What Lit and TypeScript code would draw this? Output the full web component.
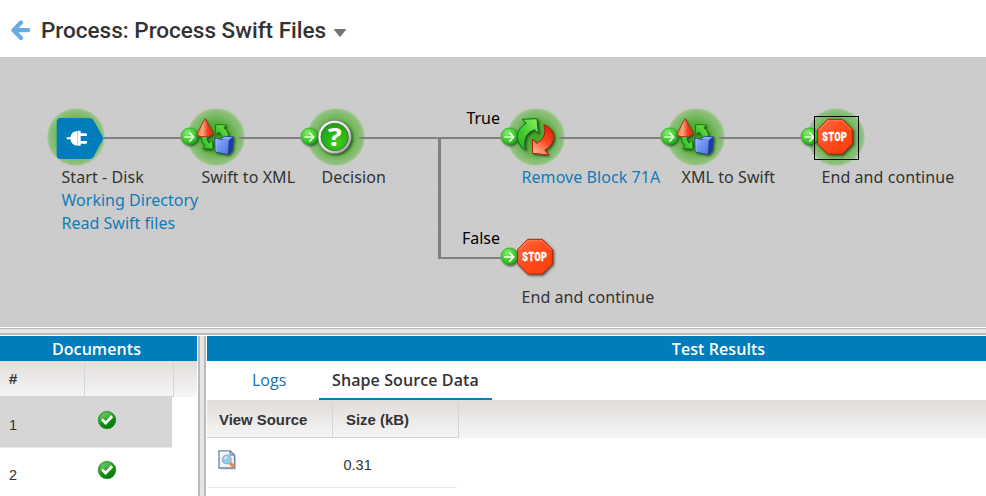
import { LitElement, html, css, svg, nothing } from "lit";
import { customElement, property } from "lit/decorators.js";

type Kind = "start" | "map" | "decision" | "process" | "stop";

interface FlowNode {
  kind: Kind;
  x: number;
  y: number;
  label: string;
  linked?: boolean;
  links?: string[];
  halo?: boolean;
  selected?: boolean;
}

const NODES: FlowNode[] = [
  { kind: "start", x: 40, y: 50, label: "Start - Disk", links: ["Working Directory", "Read Swift files"], halo: true },
  { kind: "map", x: 180, y: 50, label: "Swift to XML", halo: true },
  { kind: "decision", x: 300, y: 50, label: "Decision", halo: true },
  { kind: "process", x: 500, y: 50, label: "Remove Block 71A", linked: true, halo: true },
  { kind: "map", x: 660, y: 50, label: "XML to Swift", halo: true },
  { kind: "stop", x: 800, y: 50, label: "End and continue", halo: true, selected: true },
  { kind: "stop", x: 500, y: 170, label: "End and continue" },
];

const glyphs = {
  start: svg`<g transform="scale(.33333) translate(0 -21)">
    <path d="M62 54H148Q155 54 160 60L191 115L160 171Q155 177 148 177H62Q50 177 50 165V66Q50 54 62 54Z" fill="#007dba"/>
    <path d="M80 112H91Q95 93 113 93V137Q95 137 91 118H80ZM114 92H122V137H114ZM122 100H138Q141 100 141 103V108H122ZM122 123H141V128Q141 131 138 131H122Z" fill="#fff"/>
  </g>`,
  map: svg`<g transform="scale(.33333) translate(-30 -21)" stroke-linejoin="round">
    <g filter="url(#drop)">
      <path d="M95 100L112 106Q108 120 117 130L127 121L129 147L97 146L105 138Q90 122 95 100Z" fill="url(#leaf)" stroke="#138213" stroke-width="3"/>
      <path d="M136 74L169 75L161 84Q177 93 175 114L154 114Q156 103 147 96L137 104Z" fill="url(#leaf)" stroke="#138213" stroke-width="3"/>
      <path d="M105 56L130 102Q118 112 105 110Q91 112 80 105Z" fill="url(#cone)" stroke="#b53317" stroke-width="3"/>
      <path d="M134 113L151 118L162 109L190 110L187 152L175 164L137 156Z" fill="#24439f" stroke="#24439f" stroke-width="2"/>
      <path d="M136 115L152 119L176 120L174 162L138 155Z" fill="url(#cube)"/>
      <path d="M152 118L163 110L188 112L176 120Z" fill="#8eacf2"/>
      <path d="M138 117L138 154" stroke="#b5ccff" stroke-width="2"/>
      <path d="M177 121L189 113L186 151L176 162Z" fill="#1c3b9f"/>
    </g>
  </g>`,
  decision: svg`<g transform="scale(.33333) translate(-30 -21)">
    <g filter="url(#drop)"><circle cx="134" cy="111" r="50" fill="url(#rim)" stroke="#777" stroke-width="2"/></g>
    <circle cx="134" cy="111" r="41" fill="url(#disc)" stroke="#38813a" stroke-width="3"/>
    <text x="134" y="137" text-anchor="middle" textLength="42" lengthAdjust="spacingAndGlyphs" class="q">?</text>
  </g>`,
  process: svg`<g transform="scale(.33333) translate(-210 -36)" stroke-linejoin="round">
    <g filter="url(#drop)">
      <path d="M277 73L321 71L325 115L313 104Q276 117 286 164Q263 151 261 124Q264 99 289 85Z" fill="url(#leaf)" stroke="#087326" stroke-width="3"/>
      <path d="M342 89Q371 101 372 127Q370 149 345 166L356 180L308 175L307 132L320 145Q353 128 342 89Z" fill="url(#flame)" stroke="#b51b0a" stroke-width="3"/>
    </g>
  </g>`,
  stop: svg`<g transform="scale(.33333) translate(-30 -21)">
    <g filter="url(#drop)"><path d="M113 58H157L187 88V132L157 162H113L83 132V88Z" fill="url(#sign)" stroke="#bc2509" stroke-width="3"/></g>
    <path d="M113 60H156L185 89L182 91L155 64H115L87 92L85 89Z" fill="#ff8a66" opacity=".55"/>
    <text x="97" y="124" textLength="75" lengthAdjust="spacingAndGlyphs" class="stop">STOP</text>
  </g>`,
};

@customElement("flow-icon")
export class FlowIcon extends LitElement {
  @property() kind: Kind = "map";
  @property({ type: Boolean }) halo = false;
  @property({ type: Boolean }) selected = false;

  static styles = css`
    :host { display: block; width: 66px; height: 60px; }
    svg { display: block; overflow: visible; }
    .q { font: bold 76px "Noto Sans", sans-serif; fill: #fff; }
    .stop { font: 900 38px Roboto, sans-serif; letter-spacing: 2px; fill: #fff; stroke: #fff; stroke-width: 1px; }
  `;

  render() {
    return html`<svg width="66" height="60" viewBox="0 0 66 60">
      <defs>
        <radialGradient id="halo">
          <stop offset="0" stop-color="#3fa51c" stop-opacity=".95"/>
          <stop offset=".55" stop-color="#4cac2c" stop-opacity=".85"/>
          <stop offset=".93" stop-color="#6cba52" stop-opacity=".62"/>
          <stop offset="1" stop-color="#8bc878" stop-opacity=".35"/>
        </radialGradient>
        <radialGradient id="ball" cx=".4" cy=".3" r=".75">
          <stop offset="0" stop-color="#86ec6c"/><stop offset=".6" stop-color="#3fcd2a"/><stop offset="1" stop-color="#1ba417"/>
        </radialGradient>
        <linearGradient id="leaf" x1="0" y1="1" x2="1" y2="0">
          <stop offset="0" stop-color="#25a81c"/><stop offset=".5" stop-color="#4dd032"/><stop offset="1" stop-color="#8aee68"/>
        </linearGradient>
        <linearGradient id="cone">
          <stop offset="0" stop-color="#ff6a42"/><stop offset=".35" stop-color="#ffa68a"/><stop offset=".65" stop-color="#f4431c"/><stop offset="1" stop-color="#d92d0b"/>
        </linearGradient>
        <linearGradient id="cube" x2="1" y2="1"><stop offset="0" stop-color="#8fb2fa"/><stop offset="1" stop-color="#4a74dc"/></linearGradient>
        <linearGradient id="flame" x1=".8" y1="0" x2=".2" y2="1">
          <stop offset="0" stop-color="#d91c06"/><stop offset=".5" stop-color="#fa4a22"/><stop offset="1" stop-color="#ffb695"/>
        </linearGradient>
        <linearGradient id="sign" x2="1" y2="1"><stop offset="0" stop-color="#ff6d43"/><stop offset=".5" stop-color="#ff4a1a"/><stop offset="1" stop-color="#f93e0b"/></linearGradient>
        <linearGradient id="rim" x2="1" y2="1"><stop offset="0" stop-color="#fff"/><stop offset=".6" stop-color="#dedede"/><stop offset="1" stop-color="#888"/></linearGradient>
        <radialGradient id="disc" cx=".6" cy=".7" r=".7"><stop offset="0" stop-color="#3bcb1c"/><stop offset="1" stop-color="#22a014"/></radialGradient>
        <filter id="drop" x="-30%" y="-30%" width="170%" height="170%" color-interpolation-filters="sRGB">
          <feDropShadow dx="4" dy="4" stdDeviation="3" flood-color="#1a3414" flood-opacity=".75"/>
        </filter>
      </defs>
      ${this.halo ? svg`<circle cx="36" cy="30" r="29" fill="url(#halo)"/>` : nothing}
      ${this.kind === "start" ? nothing : svg`<g transform="scale(.33333) translate(-30 -21)">
        <g filter="url(#drop)"><circle cx="58" cy="109" r="25" fill="url(#ball)" stroke="#27a51b" stroke-width="2"/></g>
        <path d="M43 111H69M58 97L71 111L58 125" fill="none" stroke="#fff" stroke-width="5" opacity=${this.halo ? 0.85 : 1}/>
      </g>`}
      ${glyphs[this.kind]}
      ${this.selected ? svg`<rect x="14.5" y="9.5" width="44" height="43" fill="none" stroke="#000"/>` : nothing}
    </svg>`;
  }
}

@customElement("process-canvas")
export class ProcessCanvas extends LitElement {
  static styles = css`
    :host {
      display: block; position: relative; height: 270px; overflow: hidden;
      background: #ccc radial-gradient(circle at 1.5px 6.5px, #c3c3c3 0 .8px, transparent 1.1px) 0 0 / 10px 10px;
      font: 16px/23px "Noto Sans", "Open Sans", sans-serif; color: #333;
    }
    .wires { position: absolute; left: 0; top: 0; }
    .node { position: absolute; }
    .caption { margin: -1px 0 0 21.5px; white-space: nowrap; letter-spacing: .07px; }
    .link { color: #0f7dba; }
    .sub { letter-spacing: .02px; }
    .branch { position: absolute; width: 60px; left: 440px; text-align: right; color: #000; }
    .true { top: 50px; }
    .false { top: 170px; }
  `;

  render() {
    return html`
      ${NODES.map((n) => html`<div class="node" style="left:${n.x}px;top:${n.y}px">
        <flow-icon .kind=${n.kind} .halo=${!!n.halo} .selected=${!!n.selected}></flow-icon>
        <div class="caption">
          <div class=${n.linked ? "link" : ""}>${n.label}</div>
          ${n.links?.map((l) => html`<div class="link sub">${l}</div>`)}
        </div>
      </div>`)}
      <svg class="wires" width="986" height="270" fill="#808080">
        <path d="M104 80h77v2h-77zM239 80h62v2h-62zM359 80h142v2h-142zM559 80h102v2h-102zM719 80h82v2h-82zM438 82h3v118h60v2h-63z"/>
      </svg>
      <div class="branch true">True</div>
      <div class="branch false">False</div>
    `;
  }
}

@customElement("app-root")
export class AppRoot extends LitElement {
  static styles = css`
    :host { display: flex; flex-direction: column; height: 496px; overflow: hidden; background: #fff; color: #333; }
    * { box-sizing: border-box; }
    .title { display: flex; align-items: center; height: 57px; flex: none; padding: 3px 0 0 10px; }
    .title h1 { margin: 0 0 0 10px; font: 500 22.5px/30px Roboto, sans-serif; white-space: nowrap; }
    .back, .caret { display: block; }
    .caret { margin: 6px 0 0 7px; }
    .hsplit { flex: none; height: 9px; background: #e5e5e5; border: solid #fff; border-width: 1px 0; box-shadow: inset 0 1px #b8b8b8, inset 0 -2px #bbb; }
    .panes { display: flex; flex: 1; min-height: 0; }
    .docs { width: 197px; flex: none; }
    .vsplit { width: 10px; flex: none; background: #e5e5e5; border: solid #fff; border-width: 0 1px; box-shadow: inset 2px 0 #bbb, inset -2px 0 #bbb; }
    .results { flex: 1; min-width: 0; }
    .bar { height: 25px; background: #007dba; color: #fff; font: 600 16px/26px "Open Sans", sans-serif; letter-spacing: .08px; text-align: center; }
    .docs .bar { padding-right: 4px; }
    .results .bar { padding-left: 244px; }
    .head { display: flex; height: 36px; background: linear-gradient(#e1dddb, #f6f6f6); font: bold 14.9px/37px "Liberation Sans", sans-serif; }
    .cell { border-right: 1px solid #d5d5d5; border-bottom: 1px solid #d5d5d5; }
    .num { width: 85px; padding-left: 9px; }
    .mark { width: 89px; }
    .row { display: flex; width: 172px; height: 51px; border-bottom: 1px solid #e8e8e8; font: 14.5px/56px "Liberation Sans", sans-serif; }
    .row + .row { margin-top: -1px; }
    .active { background: #d6d6d6; }
    .mark svg { display: block; margin: 13px 0 0 13px; }
    .tabs { display: flex; height: 41px; border-bottom: 2px solid #e0dfde; font: 16px/38px "Open Sans", sans-serif; }
    .tab { height: 39px; padding: 0 13px; }
    .logs { margin-left: 32px; width: 80px; color: #1a6ca8; }
    .current { width: 173px; font-weight: 600; border-bottom: 2px solid #007dba; white-space: nowrap; letter-spacing: .1px; }
    .view { width: 126px; padding-left: 12px; }
    .size { width: 126px; padding-left: 13px; }
    .data { width: 250px; height: 50px; line-height: 55px; }
    .data .view { padding: 12px 0 0 11px; }
    .data .view svg { display: block; }
    .data .size { padding-left: 11.5px; }
  `;

  private tick() {
    return html`<svg width="20" height="20" viewBox="0 0 20 20">
      <defs><linearGradient id="g" x1=".2" y1="0" x2=".8" y2="1"><stop offset="0" stop-color="#5cc44e"/><stop offset=".5" stop-color="#149415"/><stop offset="1" stop-color="#007306"/></linearGradient></defs>
      <circle cx="10" cy="10" r="8.8" fill="url(#g)" stroke="#1b861c" stroke-width=".6"/>
      <path d="M3 9Q4 3 10 3Q14 3 16 6Q10 7 6 11Z" fill="#fff" opacity=".18"/>
      <path d="M5 9.5L8.6 13L15.2 6.3" fill="none" stroke="#fff" stroke-width="2.8"/>
    </svg>`;
  }

  render() {
    return html`
      <header class="title">
        <svg class="back" width="21" height="21" viewBox="0 0 21 21" fill="none" stroke="#69ace0" stroke-width="4.2" stroke-linecap="round" stroke-linejoin="round">
          <path d="M11 2.5L3.5 10.2L11 18M4 10.2H18.2"/>
        </svg>
        <h1>Process: Process Swift Files</h1>
        <svg class="caret" width="14" height="8" viewBox="0 0 14 8"><path d="M0.5 0H13.5L7.8 7.3Q7 8 6.2 7.3Z" fill="#737373"/></svg>
      </header>
      <process-canvas></process-canvas>
      <div class="hsplit"></div>
      <main class="panes">
        <section class="docs">
          <div class="bar">Documents</div>
          <div class="head"><div class="cell num">#</div><div class="cell mark"></div></div>
          ${[1, 2].map((n) => html`<div class="row ${n === 1 ? "active" : ""}">
            <div class="num">${n}</div><div class="mark">${this.tick()}</div>
          </div>`)}
        </section>
        <div class="vsplit"></div>
        <section class="results">
          <div class="bar">Test Results</div>
          <nav class="tabs"><div class="tab logs">Logs</div><div class="tab current">Shape Source Data</div></nav>
          <div class="head"><div class="cell view">View Source</div><div class="cell size">Size (kB)</div></div>
          <div class="row data">
            <div class="view">
              <svg width="19" height="20" viewBox="0 0 19 20">
                <path d="M3 2H13L18 7V19.5H3Z" fill="#777" opacity=".35"/>
                <path d="M1 .8H12L16.5 5V18H1Z" fill="#f1f6fc" stroke="#7183a9" stroke-width="1.3"/>
                <path d="M12 .8V5H16.5Z" fill="#b6c9e4" stroke="#6079a8"/>
                <path d="M12 13L16 17" stroke="#f08b35" stroke-width="3.2"/>
                <circle cx="8.8" cy="9.5" r="4.3" fill="#8dd3f1" stroke="#a3b0c2" stroke-width="1.6"/>
                <path d="M6.5 9Q7 7 9 7" fill="none" stroke="#e2f7ff" stroke-width="1.4"/>
              </svg>
            </div>
            <div class="size">0.31</div>
          </div>
        </section>
      </main>
    `;
  }
}
